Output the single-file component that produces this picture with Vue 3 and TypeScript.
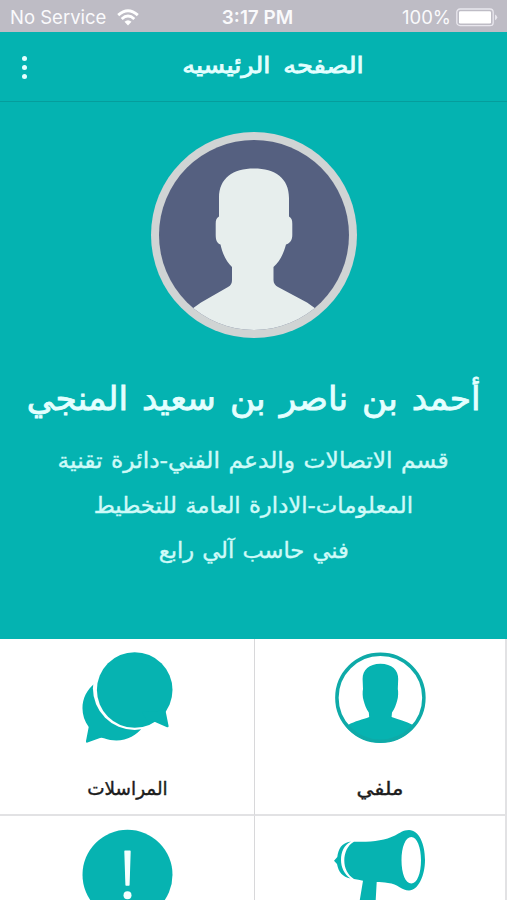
<script setup lang="ts">
interface Tile {
  id: 'profile' | 'chat' | 'announce' | 'alert'
  label: string
  stretch: number
}

interface Line {
  text: string
  stretch: number
}

const name = 'أحمد بن ناصر بن سعيد المنجي'
const details: Line[] = [
  { text: 'قسم الاتصالات والدعم الفني-دائرة تقنية', stretch: 1.062 },
  { text: 'المعلومات-الادارة العامة للتخطيط', stretch: 1.034 },
  { text: 'فني حاسب آلي رابع', stretch: 1.025 },
]
const tiles: Tile[] = [
  { id: 'profile', label: 'ملفي', stretch: 1.12 },
  { id: 'chat', label: 'المراسلات', stretch: 0.97 },
  { id: 'announce', label: '', stretch: 1 },
  { id: 'alert', label: '', stretch: 1 },
]
</script>

<template>
  <div class="screen" dir="rtl">
    <div class="status" dir="ltr">
      <div class="status-side">
        <span class="carrier">No Service</span>
        <svg class="wifi" width="22" height="17" viewBox="0 0 22 17">
          <g fill="none" stroke="#fff" stroke-width="2.9">
            <path d="M1.2 6.2Q11 -2.6 20.8 6.2" />
            <path d="M4.7 10Q11 4.2 17.3 10" />
          </g>
          <path d="M7.5 12.7Q11 9.6 14.5 12.7L11 16.4Z" fill="#fff" />
        </svg>
      </div>
      <span class="clock">3:17 PM</span>
      <div class="status-side end">
        <span class="percent">100%</span>
        <svg width="42" height="19" viewBox="0 0 42 19">
          <rect x="0.8" y="1" width="36.4" height="16.6" rx="3.2" fill="none" stroke="#e9e7ee" stroke-width="1.3" />
          <rect x="3" y="3.2" width="32" height="12.2" rx="1.2" fill="#fff" />
          <path d="M39 6.4Q41.2 7.4 41.2 9.3T39 12.2Z" fill="#e9e7ee" />
        </svg>
      </div>
    </div>

    <header class="bar">
      <h1 class="title"><span class="fit">الصفحه الرئيسيه</span></h1>
      <button class="more" aria-label="menu"><i></i><i></i><i></i></button>
    </header>

    <section class="hero">
      <svg class="avatar" width="206" height="206" viewBox="0 0 206 206">
        <defs>
          <clipPath id="face"><circle cx="103" cy="103" r="95" /></clipPath>
        </defs>
        <circle cx="103" cy="103" r="103" fill="#d0d4d4" />
        <circle cx="103" cy="103" r="95" fill="#556080" />
        <path
          clip-path="url(#face)"
          fill="#e7eeed"
          d="M103 36.5C124 36.5 138 46 138 66V84.5C140.5 86 141.3 88 141.3 92V103C141.3 108 139 111.5 135 112.5C132.5 122 128.5 130 122.5 135V148C122.5 151 124 153.5 127 155L156 170.5L175 184V206H31V184L50 170.5L77 155C80 153.5 81 151 81 148V135C75.5 130 71.5 122 69.5 112.5C66 111.5 64.7 108 64.7 103V92C64.7 88 65.5 86 68 84.5V66C68 46 82 36.5 103 36.5Z"
        />
      </svg>
      <h2 class="name"><span class="fit">{{ name }}</span></h2>
      <p v-for="(line, i) in details" :key="i" class="detail">
        <span class="fit" :style="{ transform: `scaleX(${line.stretch})` }">{{ line.text }}</span>
      </p>
    </section>

    <nav class="grid">
      <a v-for="tile in tiles" :key="tile.id" class="tile">
        <svg v-if="tile.id === 'profile'" class="icon" width="91" height="91" viewBox="0 0 91 91">
          <defs>
            <clipPath id="bust"><circle cx="45.4" cy="45.7" r="45" /></clipPath>
          </defs>
          <path
            clip-path="url(#bust)"
            fill="#06b3b1"
            d="M45.4 11.7C57 11.7 63.2 18 63.2 27L62.8 37C63.4 40 63.3 45 62.2 48.5C61.2 52.500 59.500 57 57 60.500L56.600 65C63 67.5 71 69 78 73L91 81V91H0V81L13 73C20 69 28 67.5 34.200 65L33.800 60.500C31.300 57 29.600 52.500 28.600 48.500C27.500 45 27.400 40 28 37L27.600 27C27.600 18 34 11.7 45.4 11.7Z"
          />
          <circle cx="45.4" cy="45.7" r="43.5" fill="none" stroke="#0eaaa8" stroke-width="3.5" />
        </svg>
        <svg v-else-if="tile.id === 'chat'" class="icon" width="91" height="91" viewBox="0 0 91 91">
          <path
            fill="#06b3b1"
            d="M13 31.3L40 40L60.7 75C53 86 38 92 22 86.3Q20 85.2 18 86L5.5 90.6Q3.8 91 4 89L6.7 75C-3.5 61 -1 42 13 31.3Z"
          />
          <circle cx="52.7" cy="36.2" r="41.8" fill="#fff" />
          <circle cx="52.7" cy="38" r="37.8" fill="#06b3b1" />
          <path
            fill="#06b3b1"
            d="M83.5 58.5L86.6 74Q86.7 75.7 85 75.2L72.5 69.8Q71.5 69.4 67 72.500L60 60Z"
          />
        </svg>
        <svg v-else-if="tile.id === 'announce'" class="icon" width="92" height="91" viewBox="0 0 92 91">
          <g fill="#06b3b1">
            <path d="M17 12.5C7 14 4.5 20 3.3 28L0 31.7L3 35C4.5 43 8.5 48 16.5 49.5C10 45 7 38 7 31C7 23 10 16 17 12.5Z" />
            <path
              fill-rule="evenodd"
              d="M20 12.7C38 13.3 50 11.7 61 6.5C66 4 69 1 75 1C85 1 91 15 91 31S84 61.5 75 61.5C68 61.5 64 55 54 54C50 53.3 46 53 42.7 53L41.7 71L41 91H23L25.8 71L29 51.8C26 51 23 50.7 20 50C13.5 46 10.3 39 10.3 31.5S13.5 16 20 12.7ZM77.3 8C71.5 8 67.5 18 67.5 31.3S71.5 54.6 77.3 54.6S87 44.5 87 31.3S83 8 77.3 8Z"
            />
          </g>
        </svg>
        <svg v-else class="icon" width="91" height="91" viewBox="0 0 91 91">
          <circle cx="45.5" cy="45.8" r="45" fill="#06b3b1" />
          <path d="M43 22.2H48L46.9 56H44.1Z" fill="#f4ffff" stroke="#f4ffff" stroke-width="1.4" stroke-linejoin="round" />
          <circle cx="45.5" cy="66.3" r="4" fill="#f4ffff" />
        </svg>
        <span v-if="tile.label" class="label" :style="{ transform: `scaleX(${tile.stretch})` }">{{ tile.label }}</span>
      </a>
    </nav>
  </div>
</template>

<style>
body {
  overflow: hidden;
}
</style>

<style scoped>
.screen {
  width: 507px;
  height: 900px;
  overflow: hidden;
  background: #04b3b1;
  font-family: 'DejaVu Sans', 'Noto Sans', sans-serif;
  color: #e4ffff;
}
.status {
  display: grid;
  grid-template-columns: 1fr auto 1fr;
  align-items: center;
  height: 32px;
  padding: 2px 9px 0 10px;
  box-sizing: border-box;
  background: #bebcc5;
  color: #fafafc;
  font-family: Inter, 'Liberation Sans', sans-serif;
  font-size: 18.5px;
}
.status-side {
  display: flex;
  align-items: center;
  gap: 11px;
}
.end {
  justify-content: flex-end;
  gap: 5px;
}
.clock {
  padding-left: 7px;
  font-weight: 600;
  font-size: 18.9px;
}
.bar {
  display: grid;
  grid-template-columns: 48px 1fr 48px;
  height: 70px;
  box-sizing: border-box;
  border-bottom: 1px solid #059d9c;
}
.title {
  grid-column: 2;
  margin: 0;
  padding-left: 38px;
  text-align: center;
  font-size: 22px;
  line-height: 68px;
  font-weight: 400;
  white-space: nowrap;
  word-spacing: 4px;
  -webkit-text-stroke: 0.8px currentColor;
}
.title .fit {
  transform: scaleX(1.165);
}
.more {
  display: flex;
  flex-direction: column;
  align-items: center;
  gap: 4px;
  padding: 24px 0 0;
  border: 0;
  background: none;
}
.more i {
  width: 5px;
  height: 5px;
  border-radius: 50%;
  background: #e4ffff;
}
.hero {
  height: 537px;
  box-sizing: border-box;
  padding-top: 30px;
  text-align: center;
  white-space: nowrap;
}
.avatar {
  display: block;
  margin: 0 auto;
}
.fit {
  display: inline-block;
}
.name {
  margin: 31px 0 9px;
  font-size: 33px;
  line-height: 60px;
  font-weight: 400;
  word-spacing: 3px;
  -webkit-text-stroke: 0.8px currentColor;
}
.name .fit {
  transform: scaleX(1.042);
}
.detail {
  margin: 0;
  font-size: 22px;
  line-height: 45px;
  word-spacing: 1px;
  color: #cffaf8;
  -webkit-text-stroke: 0.4px currentColor;
}
.grid {
  display: grid;
  grid-template-columns: 252px 255px;
  grid-auto-rows: 177px;
  background: #fff;
}
.tile {
  display: flex;
  flex-direction: column;
  align-items: center;
  box-sizing: border-box;
  padding-top: 13px;
  border-bottom: 2px solid #e2e2e4;
  border-right: 2px solid #e2e2e4;
  color: #1c1c1c;
}
.tile:nth-child(even) {
  padding-left: 1px;
  border-right: 1px solid #d8d8da;
}
.icon {
  display: block;
}
.label {
  margin-top: 30px;
  font-size: 19px;
  line-height: 30px;
  -webkit-text-stroke: 0.4px currentColor;
}
</style>
